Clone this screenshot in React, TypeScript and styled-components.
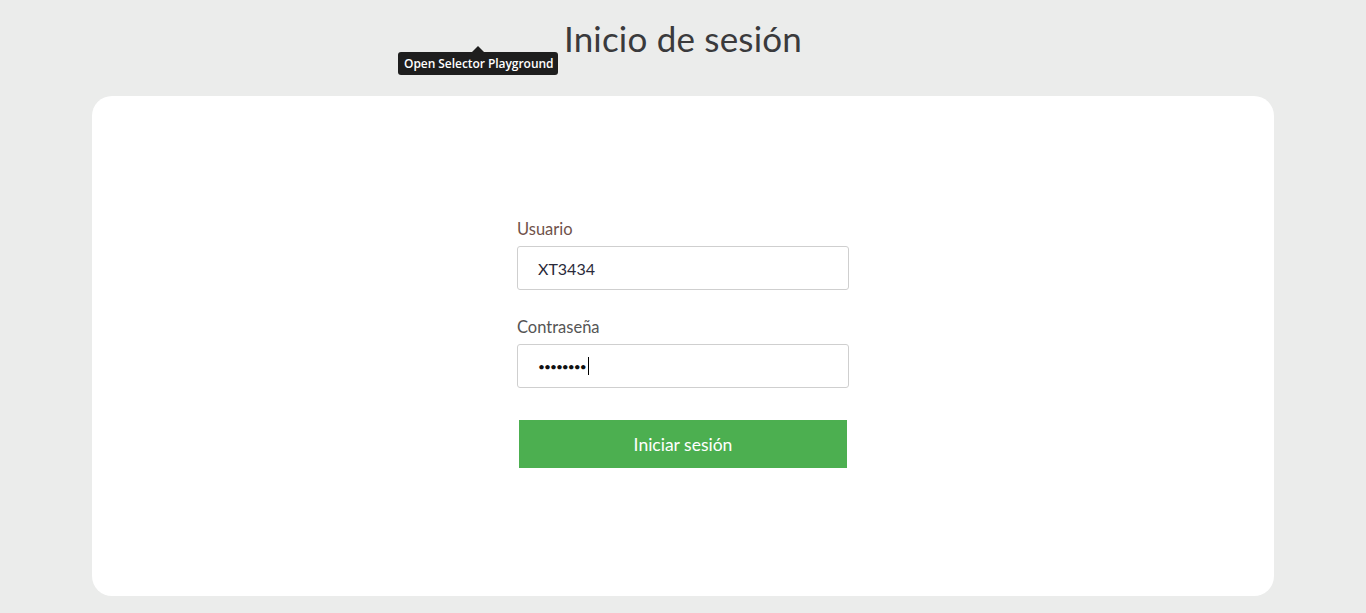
import React from "react";
import styled, { createGlobalStyle } from "styled-components";

const Global = createGlobalStyle`
  html, body { margin: 0; padding: 0; }
  body {
    background: #ebeceb;
    font-family: Lato, "Open Sans", sans-serif;
    color: #333;
  }
`;

const Page = styled.div`
  width: 1366px;
  height: 613px;
  display: flex;
  flex-direction: column;
  align-items: center;
  overflow: hidden;
`;

const Header = styled.header`
  position: relative;
  height: 96px;
  width: 100%;
  display: flex;
  justify-content: center;
  box-sizing: border-box;
  padding-top: 16px;
`;

const Title = styled.h1`
  margin: 0;
  font-family: Lato, sans-serif;
  font-weight: 400;
  font-size: 35px;
  line-height: 44px;
  color: #3a3a3c;
  letter-spacing: 0.2px;
`;

const Tooltip = styled.div`
  position: absolute;
  left: 398px;
  top: 52px;
  height: 23px;
  padding: 0 5px 0 6px;
  display: flex;
  align-items: center;
  background: #1e1e1e;
  color: #fff;
  font-family: "Open Sans", sans-serif;
  font-weight: 600;
  font-size: 12px;
  letter-spacing: -0.05px;
  border-radius: 3px;
  white-space: nowrap;
  &::before {
    content: "";
    position: absolute;
    left: 74px;
    top: -6px;
    border-left: 6px solid transparent;
    border-right: 6px solid transparent;
    border-bottom: 6px solid #1e1e1e;
  }
`;

const Card = styled.main`
  width: 1182px;
  height: 500px;
  background: #fff;
  border-radius: 20px;
  display: flex;
  justify-content: center;
  box-sizing: border-box;
  padding-top: 123px;
`;

const Form = styled.form`
  width: 332px;
  display: flex;
  flex-direction: column;
`;

const Field = styled.div`
  display: flex;
  flex-direction: column;
  gap: 7px;
  margin-bottom: 27px;
`;

const Label = styled.label<{ $tone?: string }>`
  font-family: Lato, sans-serif;
  font-size: 16.5px;
  line-height: 20px;
  color: ${(p) => p.$tone || "#555"};
`;

const Input = styled.div`
  height: 44px;
  box-sizing: border-box;
  border: 1px solid #cfcfcf;
  border-radius: 3px;
  padding: 0 20px;
  display: flex;
  align-items: center;
  font-family: Lato, sans-serif;
  font-size: 16px;
  color: #2a2a3a;
`;

const Dots = styled.span`
  font-size: 12px;
  letter-spacing: -1px;
  color: #111;
`;

const Caret = styled.span`
  display: inline-block;
  width: 1px;
  height: 18px;
  background: #000;
  margin-left: 2px;
`;

const Button = styled.button`
  margin: 5px 2px 0;
  height: 48px;
  border: none;
  background: #4caf50;
  color: #fff;
  font-family: Lato, sans-serif;
  font-size: 17.5px;
  cursor: pointer;
`;

export default function App() {
  return (
    <>
      <Global />
      <Page>
        <Header>
          <Title>Inicio de sesión</Title>
          <Tooltip>Open Selector Playground</Tooltip>
        </Header>
        <Card>
          <Form onSubmit={(e) => e.preventDefault()}>
            <Field>
              <Label $tone="#70524a">Usuario</Label>
              <Input>XT3434</Input>
            </Field>
            <Field>
              <Label>Contraseña</Label>
              <Input>
                <Dots>••••••••</Dots>
                <Caret />
              </Input>
            </Field>
            <Button type="submit">Iniciar sesión</Button>
          </Form>
        </Card>
      </Page>
    </>
  );
}
